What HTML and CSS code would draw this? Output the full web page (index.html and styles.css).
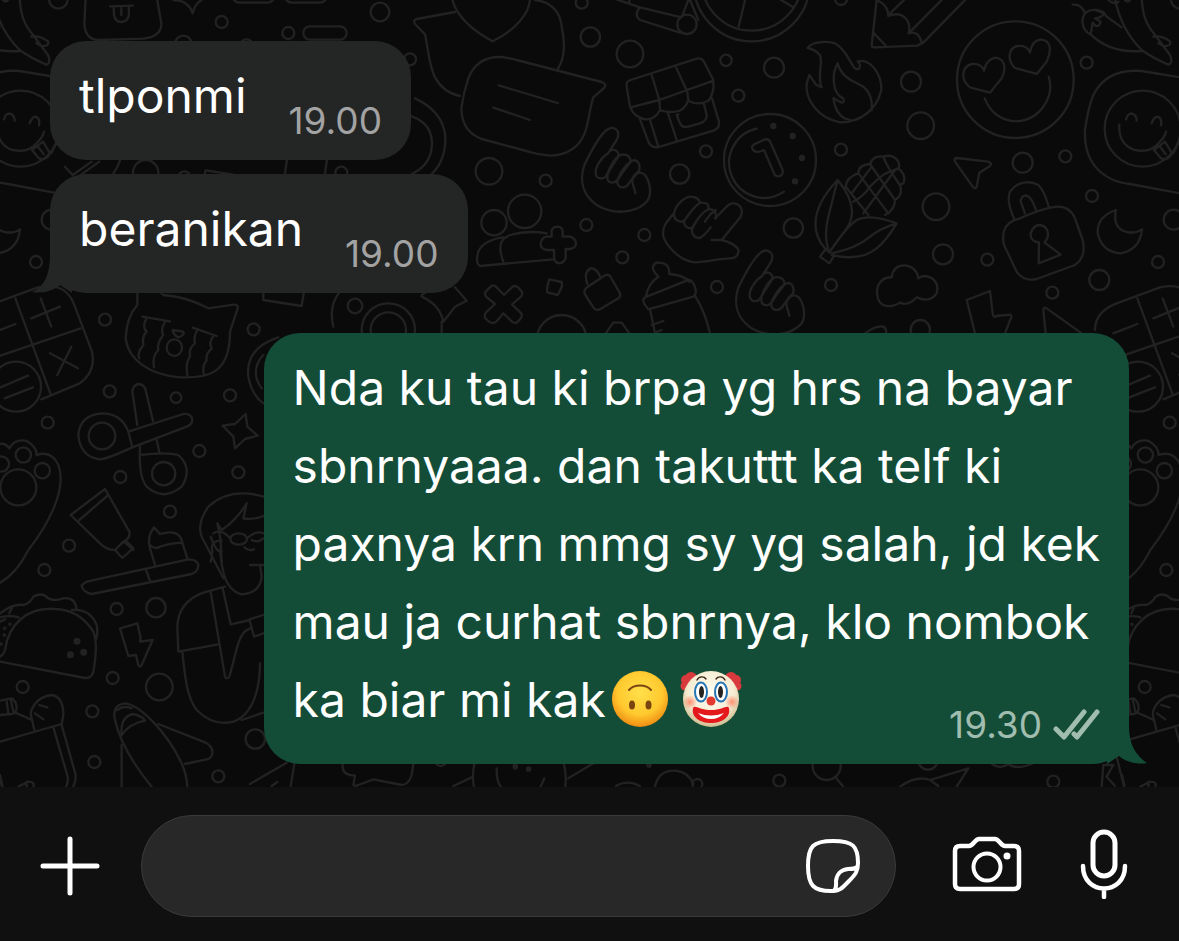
FILE: index.html
```html
<!DOCTYPE html>
<html lang="id">
<head>
<meta charset="utf-8">
<meta name="viewport" content="width=device-width, initial-scale=1">
<title>Chat</title>
<link rel="stylesheet" href="styles.css">
</head>
<body>
<main class="chat">
  <svg class="wallpaper" viewBox="0 0 1179 787" preserveAspectRatio="xMinYMin slice" aria-hidden="true">
    <defs>
      <g id="fist">
        <path d="M650 420C665 390 640 375 620 390C600 405 570 460 553 495C535 550 555 590 590 615C640 645 700 640 735 610C760 590 750 545 735 525C722 512 702 518 697 540C697 560 705 565 706 580"/>
        <path d="M650 420L624 460C600 475 585 505 587 520C590 540 612 538 618 528C632 505 645 485 656 468C655 445 630 445 624 460"/>
        <path d="M656 468C635 485 620 520 622 535C625 552 645 550 652 540C668 515 680 500 692 485C690 462 668 460 656 468M692 485C670 500 650 535 652 550C660 570 682 562 688 548L718 510C722 488 708 474 692 485"/>
      </g>
      <g id="doodles">
        <!-- top left -->
        <g transform="scale(.33333)">
          <circle cx="175" cy="-2" r="28"/>
          <path d="M257-10L253 70Q255 118 295 120L430 116Q485 110 484 70L470-10"/>
          <path d="M330 19L398 17M341 20L342 45Q345 66 364 66Q387 64 387 40L386 20M364 22V45"/>
          <path d="M520 0Q565 0 578 40Q585 10 605 0"/>
          <circle cx="665" cy="66" r="18"/><circle cx="865" cy="99" r="18"/><circle cx="1140" cy="36" r="28"/>
          <circle cx="1230" cy="178" r="18"/><circle cx="550" cy="132" r="25"/><circle cx="740" cy="136" r="18"/>
          <rect x="910" y="79" width="130" height="40" rx="20"/>
          <rect x="698" y="-32" width="125" height="40" rx="20"/><rect x="855" y="-32" width="125" height="40" rx="20"/>
          <circle cx="437" cy="518" r="38"/><circle cx="553" cy="532" r="18"/><circle cx="1024" cy="518" r="18"/>
          <path d="M195 500L218 525L275 485M235 530L298 485M340 520Q355 500 362 475M610 540L617 511L700 524M855 522L862 470M975 522L982 470"/>
        </g>
        <!-- top centre -->
        <g transform="translate(400) scale(.33333)">
          <path d="M165 36L50 57Q38 60 45 72L75 103C85 150 88 200 105 232Q130 278 180 288M155-10C165 45 215 90 278 124C345 90 392 40 390-10M405 0C460 5 482 45 485 80C495 125 497 170 474 206"/>
          <path d="M205 235Q230 170 300 171Q320 172 350 180L605 246Q622 252 612 264L580 292C570 320 568 355 556 395Q530 465 450 467Q420 465 390 456L245 417Q185 395 184 325Q190 280 205 235ZM296 256L473 309M280 323L390 360"/>
          <circle cx="545" cy="8" r="18"/><circle cx="571" cy="111" r="29"/><circle cx="690" cy="162" r="40"/>
          <circle cx="978" cy="181" r="17"/><circle cx="1122" cy="203" r="30"/><circle cx="1015" cy="287" r="18"/>
          <circle cx="918" cy="454" r="18"/><circle cx="839" cy="522" r="29"/><circle cx="267" cy="514" r="40"/><circle cx="437" cy="542" r="18"/>
          <circle cx="559" cy="675" r="18"/><circle cx="733" cy="705" r="18"/><circle cx="667" cy="772" r="18"/><circle cx="951" cy="861" r="18"/><circle cx="1180" cy="684" r="29"/>
          <path d="M640-5L720 22L845 52M720 22Q700 45 720 60L840 98M688 10V-5M845 52L865 0M870 0L895 60"/>
          <circle cx="861" cy="73" r="29"/>
          <circle cx="1055" cy="-50" r="174"/><circle cx="1055" cy="-58" r="150"/><path d="M1016 80L1035 0M1180 22L1130-8"/>
          <path d="M680 260Q676 245 692 240L890 176Q905 172 912 185L940 240Q944 280 925 302Q895 318 865 302Q850 335 825 335Q800 338 780 330Q765 360 735 358Q700 350 690 320ZM755 225L778 300L780 330M828 202L862 275L865 302M692 322L778 300L940 242M720 358L745 425Q755 447 780 440L940 392Q960 385 957 365L936 295M750 360L775 440M804 340L830 420M835 343L830 345L840 370Q847 385 865 380L900 370Q922 362 920 345L912 312"/>
          <circle cx="1110" cy="480" r="138"/><path d="M1070 386A105 105 0 1 0 1152 575"/>
          <path d="M1062 433L1095 418Q1108 416 1112 428L1148 510Q1150 528 1136 529Q1126 530 1122 520L1092 450L1075 456Q1056 455 1056 440Z"/>
          <g class="dots"><circle cx="1120" cy="378" r="6"/><circle cx="1178" cy="408" r="6"/><circle cx="1185" cy="544" r="6"/><circle cx="1206" cy="474" r="6"/></g>
          <use href="#fist"/>
          <use href="#fist" transform="translate(462 368)"/>
          <path d="M822 640C800 665 785 680 790 710C805 750 850 785 885 787C920 787 960 775 990 775Q1015 775 1016 750Q1005 730 965 720L1022 650C1035 620 1005 600 985 615L945 655M935 720H965M822 640C828 610 860 585 880 591Q895 593 900 608Q930 605 925 628Q950 625 948 655M900 608C880 620 865 645 853 662C840 670 820 660 822 640M925 628C905 635 890 660 878 682C865 690 848 675 853 662M948 630C930 640 925 650 915 665M932 682Q915 705 900 714C880 715 870 695 880 682"/>
          <circle cx="282" cy="668" r="38"/><circle cx="374" cy="634" r="50"/>
          <path d="M310 712Q250 720 235 755Q225 790 240 798L460 778M310 785Q285 720 330 705Q380 690 440 700M455 710V690Q460 680 472 680Q488 680 488 698V710H510Q528 715 528 733Q525 745 510 747H497V775Q490 790 478 790Q462 788 462 772V750H440Q420 745 422 730Q425 712 440 710Z"/>
          <path d="M257 875L275 857Q283 855 290 862L312 885L338 860Q346 855 355 863L366 875Q368 884 363 890L336 913L364 940Q368 950 360 958L350 968Q342 970 336 965L310 940L290 964Q280 972 270 967L256 955Q252 945 258 937L285 912L258 890Q253 882 257 875Z"/>
          <path d="M448 838L485 846Q488 855 483 866L473 885L442 877Q440 870 443 855ZM65 885L100 862M165 862L200 902L165 920L130 965Q120 915 65 890M125 965V1000"/>
          <path d="M557 865Q550 875 556 885L582 925Q590 932 600 928L655 895Q663 890 660 880L630 828Q625 822 615 826ZM562 852Q550 815 572 805Q590 803 602 834"/>
          <circle cx="485" cy="1020" r="75"/><path d="M617 1000L640 968H665L688 1000"/>
          <path d="M740 890Q725 895 732 910L745 928Q810 910 880 890Q895 880 880 850Q870 835 860 842ZM738 888Q745 850 775 830Q745 800 770 788Q810 785 808 822Q850 825 868 845M750 928L765 1000M885 888Q915 935 930 1000M755 975L790 963M765 998L785 990"/>
          <path d="M-10 340Q95 350 96 430Q95 495 35 522M45 295Q130 335 136 410Q138 480 95 522"/>
          <circle cx="-35" cy="990" r="80"/><circle cx="-35" cy="990" r="53"/>
        </g>
        <!-- top right -->
        <g transform="translate(780) scale(.33333)">
          <circle cx="183" cy="-3" r="18"/><circle cx="393" cy="245" r="30"/><circle cx="422" cy="377" r="40"/><circle cx="183" cy="449" r="18"/>
          <circle cx="920" cy="188" r="18"/><circle cx="728" cy="488" r="30"/><circle cx="856" cy="469" r="18"/><circle cx="936" cy="588" r="18"/>
          <circle cx="468" cy="620" r="40"/><circle cx="489" cy="763" r="30"/><circle cx="622" cy="779" r="18"/><circle cx="958" cy="840" r="30"/>
          <circle cx="817" cy="878" r="18"/><circle cx="1134" cy="786" r="18"/><circle cx="153" cy="855" r="18"/><circle cx="1181" cy="659" r="30"/><circle cx="421" cy="989" r="29"/>
          <path d="M83 144C95 125 135 122 165 130C200 150 210 190 225 205C240 215 245 195 233 184C270 175 305 220 304 270C290 330 240 368 180 367C115 355 75 300 80 250L88 225L108 254L125 262C110 230 130 190 120 165Q105 148 83 144ZM173 190C155 220 155 280 190 296Q195 308 185 308L160 294C165 330 180 355 210 360M173 190C185 235 225 245 250 260Q280 285 275 330"/>
          <path d="M290 0L275 135Q275 142 285 142L412 137L430 128L560-5M290 0Q325 15 325 48C370 30 395 65 386 100Q415 90 425 128M325 45L372 0M388 98L485 0M280 98L318 138"/>
          <circle cx="706" cy="239" r="175"/>
          <path d="M630 278L570 262C540 240 545 200 575 192Q605 190 612 212Q618 180 645 173C675 175 680 205 665 235ZM770 222L705 204C680 180 685 145 712 138Q742 135 750 158Q755 122 782 118C815 122 815 150 800 185ZM614 295C630 335 660 362 710 364C780 360 825 290 806 230"/>
          <path d="M878 14Q905 12 915 40M950 30Q910 25 907 65Q910 95 932 103C970 140 1020 158 1085 153M932 103L938 68Q955 90 962 65L945 55Q975 50 968 38L945 30Q970 30 980 50L1025 82M1005-5C1015 50 1040 105 1085 150Q1120 175 1165 194Q1180 190 1170 165L1125 105C1095 70 1088 40 1085-5M1120 110Q1145 105 1170 124Q1175 140 1150 138L1135 130M985 0Q1000 15 1015 5M1035 0Q1045 8 1050 0"/>
          <path d="M1200 232L1085 213Q980 205 940 285Q925 320 915 390Q910 500 1000 540Q1020 548 1050 552L1200 580"/>
          <circle cx="1088" cy="386" r="114"/>
          <path d="M1038 358Q1043 340 1055 340Q1070 345 1070 362M1115 370Q1122 350 1133 350Q1147 355 1143 376M1018 374Q1015 430 1060 449Q1110 462 1140 425Q1155 410 1158 395M1122 450L1140 472Q1150 482 1165 474Q1180 465 1170 450L1155 425ZM1140 440L1157 462M1180 460L1195 430"/>
          <path d="M530 474L625 485Q638 490 630 498L598 518L590 560Q585 570 578 560L525 485Q520 475 530 474Z"/>
          <path d="M173 540Q215 590 216 635Q215 665 200 685L148 757Q130 710 145 650Q160 590 173 540ZM173 540C125 590 100 640 108 690Q115 730 148 757M148 757Q200 680 230 660Q270 640 350 670Q320 720 290 745Q240 785 155 765M155 760Q230 745 270 710Q300 685 350 670M135 750L120 770L148 790L162 768M197 560Q200 530 235 520Q235 495 270 492Q280 465 310 470Q340 460 355 485Q360 500 355 505Q380 525 370 550L360 555Q370 585 345 600Q345 630 315 645M197 560L265 645M235 520L325 640M270 492L345 600M310 470Q320 500 360 555M220 605Q250 590 270 560Q300 530 318 520L355 505M250 640L345 510M215 580L275 500"/>
          <path d="M298 905Q285 880 295 855Q310 830 335 832Q340 795 375 796Q410 800 415 835Q435 820 460 838Q478 855 470 880Q450 910 410 892Q385 920 360 908Q320 930 298 905Z"/>
          <path d="M720 655Q800 620 835 620Q870 620 885 655L908 720Q920 770 885 795L770 837Q730 845 710 815L672 735Q660 680 700 662ZM703 658C690 630 680 600 690 575C710 545 750 540 775 555C795 575 800 600 806 620M735 640L722 605Q722 588 738 586Q755 590 768 630M776 790L777 727Q750 725 752 700Q760 675 780 675Q805 680 804 705Q802 720 793 727L842 764Z"/>
          <path d="M1008 630Q950 650 953 700Q965 755 1020 760Q1080 750 1086 688Q1070 700 1045 697C1010 690 1000 665 1008 630Z"/>
          <path d="M585 1000L560 900L630 873L638 940Q640 955 650 948L690 944Q698 948 690 960L675 1000M797 1000L790 930Q790 920 800 925L905 1000M255 1000Q290 975 310 980Q320 985 318 1000"/>
          <!-- four-key calculator -->
          <path d="M945 990Q945 935 1010 910L1140 862Q1220 845 1247 910L1302 1055Q1315 1115 1265 1150L1150 1198M1072 895L1178 1183M960 1090L1268 985M1000 1000L1072 972M1148 895L1180 980M1120 955L1206 920M1176 1060L1260 1105M1240 1040L1198 1125"/>
          <circle cx="1074" cy="1160" r="75"/><path d="M1020 1165L1110 1127M1040 1195L1125 1162"/>
        </g>
        <!-- middle left -->
        <g transform="translate(0 280) scale(.33333)">
          <circle cx="315" cy="119" r="18"/><circle cx="761" cy="148" r="18"/><circle cx="329" cy="334" r="18"/><circle cx="528" cy="353" r="16"/><circle cx="690" cy="346" r="18"/>
          <circle cx="143" cy="428" r="18"/><circle cx="598" cy="513" r="18"/><circle cx="361" cy="591" r="18"/><circle cx="715" cy="577" r="18"/><circle cx="510" cy="695" r="18"/>
          <path d="M412 35V75Q380 110 377 175C385 240 450 285 540 292C620 295 690 285 690 155L713 85Q715 72 700 74L625 85Q560 50 490 45L480 35M427 110L510 124M440 114Q425 140 440 155Q425 170 430 195Q410 220 418 235M495 126Q480 150 490 165Q470 190 475 210Q455 230 462 262M578 143L650 168M592 150Q580 170 585 190Q565 205 570 230Q555 250 562 285M640 168Q625 190 635 205Q615 225 620 240Q605 260 612 285M518 150L550 155Q555 165 535 172Q520 165 518 150Z"/>
          <ellipse cx="523" cy="203" rx="23" ry="25"/><path d="M790 35V60L905 78L912 35"/>
          <path d="M1020 35Q985 75 1000 140"/><circle cx="1065" cy="78" r="22"/>
          <path d="M835 172Q735 205 745 290Q755 345 790 370M790 225Q765 250 768 285Q770 305 785 325"/>
          <circle cx="306" cy="468" r="40"/><circle cx="491" cy="581" r="35"/>
          <path d="M385 455Q365 400 305 400Q240 405 235 465Q240 530 300 538Q320 537 397 502ZM412 435L397 335Q400 312 418 312Q435 315 438 335L459 423M385 455L550 402Q575 400 577 420Q575 435 560 440L397 502M420 500Q415 590 440 620Q490 665 545 620Q580 565 535 525Q500 515 420 525M470 480L478 515"/>
          <path d="M737 402L742 440L773 467L735 477L705 505L700 470L668 437L705 432Z"/>
          <circle cx="55" cy="622" r="54"/><circle cx="70" cy="525" r="23"/><circle cx="127" cy="572" r="23"/><circle cx="4" cy="552" r="23"/>
          <path d="M-15 500Q10 480 28 505Q45 475 80 483Q110 500 110 525Q155 510 175 555C200 620 155 720 85 810M0 908Q50 880 85 810"/>
          <path d="M212 705L315 627L388 755Q392 775 370 785L345 810Q320 810 300 790L212 705M238 720L325 645M375 788L400 810"/>
          <path d="M790 650Q690 620 625 680Q590 730 605 770L670 895M740 670L730 715Q760 720 790 708M740 670Q710 720 665 750L652 730L662 780L665 845M632 845Q640 820 635 800Q640 780 665 782"/>
        </g>
        <!-- bottom left -->
        <g transform="translate(0 530) scale(.33333)">
          <circle cx="207" cy="47" r="18"/><circle cx="133" cy="120" r="18"/><circle cx="350" cy="237" r="18"/><circle cx="468" cy="233" r="29"/><circle cx="338" cy="444" r="18"/>
          <circle cx="478" cy="471" r="40"/><circle cx="68" cy="471" r="18"/><circle cx="277" cy="544" r="18"/><circle cx="283" cy="696" r="18"/><circle cx="655" cy="739" r="18"/><circle cx="766" cy="627" r="29"/>
          <path d="M345 60L367 84L400 54L380 35M465 105L450 55Q440 20 462-8L480 12Q540-5 547 38L562 85M450 45Q465 60 480 50Q510 40 547 38"/>
          <path d="M260 155L565 88Q592 88 595 105Q595 125 575 132L275 192Q245 185 245 165ZM438 120L450 153"/>
          <path d="M0 395L255 444Q275 445 280 425Q295 340 280 305Q240 240 165 237C80 230 25 285 15 360Q10 375 0 380M0 250Q40 220 70 225Q90 220 100 200Q125 185 145 205Q160 215 190 205Q225 200 230 238M215 240Q270 235 290 285Q295 310 287 330M28 250L35 235M0 262Q30 255 55 262M0 275L15 268"/>
          <g class="dots"><circle cx="231" cy="334" r="7"/><circle cx="251" cy="367" r="7"/><circle cx="211" cy="374" r="7"/><circle cx="14" cy="295" r="2"/><circle cx="30" cy="283" r="2"/><circle cx="13" cy="315" r="2"/><circle cx="3" cy="342" r="2"/></g>
          <path d="M360 295L412 280L422 325L420 335L458 330L425 405Q420 415 415 405L408 375L385 378Z"/>
          <path d="M675 170L610 188Q535 215 532 290L535 365L655 343M547 365C555 440 560 500 590 540Q640 590 700 575C770 550 780 450 780 400M632 185L675 440Q680 450 688 440C700 400 705 370 715 340Q725 305 750 295M668 175L692 283L750 270M790 255L748 268L762 320L790 310M725 570L790 548M660 60L665 100Q675 180 725 193Q780 190 785 140L780 105M750 105H790"/>
          <ellipse cx="716" cy="27" rx="25" ry="17"/><path d="M740 25Q770 0 790 10M755 30Q775 40 790 25M733 52Q745 65 762 58M632 20Q650 70 665 65M640 10Q665-5 690 25"/>
          <path d="M0 635L185 582L190 555Q190 500 155 495C110 500 85 540 95 565L103 600M118 525L142 532M105 550L130 568M0 512L35 505Q50 515 50 535Q48 550 35 552L0 555M20 515L25 548M33 512L40 545M45 548Q75 560 95 570M185 585L227 735Q228 750 220 770M160 592L203 740Q205 760 198 770M0 735L8 770M55 770L85 755Q105 755 100 770M80 755V770"/>
          <path d="M345 570Q335 525 375 520C420 525 500 605 545 700Q560 735 562 770M345 570Q365 660 455 770M365 645V770M365 615Q360 560 400 552Q430 560 435 572Q390 580 365 615ZM352 540Q370 525 395 535M475 582L615 637Q640 650 637 670Q635 685 620 688L555 702"/>
        </g>
        <!-- strip under the last message -->
        <g transform="translate(250 740) scale(.33333)">
          <path d="M0 132L110 68M133 72L122 138M65 138L82 126M278 72Q275 100 300 105L315 107L310 135Q315 140 325 135L370 118L455 135Q475 135 485 105L490 72M610 138L665 112M673 72Q665 110 672 140M942 72Q950 110 946 140M740 85Q740 130 753 140M883 115L872 140M955 115L1030 70M1098 138Q1130 118 1170 138M1215 140Q1225 90 1275 92Q1315 95 1330 132M1950 140Q2000 105 2040 120L2155 85L2120 140M2040 120L2065 138"/>
          <circle cx="572" cy="60" r="18"/><circle cx="1342" cy="132" r="15"/><circle cx="1588" cy="122" r="18"/><circle cx="2034" cy="60" r="29"/><circle cx="2410" cy="125" r="18"/>
          <circle cx="1730" cy="78" r="42"/><path d="M1755 110L1780 140M2226 72Q2250 90 2275 72Q2300 90 2345 72M2555 140L2560 75L2590 75L2570 110L2595 138M2600 50L2622 140"/>
          <g class="dots"><circle cx="796" cy="80" r="5"/><circle cx="836" cy="87" r="5"/><circle cx="1197" cy="75" r="5"/></g>
        </g>
      </g>
    </defs>
    <use href="#doodles"/>
    <use href="#doodles" x="-1122"/>
    <use href="#doodles" x="1122"/>
  </svg>

  <article class="bubble bubble-in">
    <p class="text">tlponmi</p>
    <footer class="meta"><time datetime="19:00">19.00</time></footer>
  </article>

  <article class="bubble bubble-in">
    <p class="text">beranikan</p>
    <footer class="meta"><time datetime="19:00">19.00</time></footer>
    <svg class="tail tail-in" viewBox="0 0 40 48" aria-hidden="true"><path d="M18 0V10C18 30 12 42 0 47C12 49 22 45 28 40L40 48V0Z"/></svg>
  </article>

  <article class="bubble bubble-out">
    <p class="text">Nda ku tau ki brpa yg hrs na bayar<br>sbnrnyaaa. dan takuttt ka telf ki<br>paxnya krn mmg sy yg salah, jd kek<br>mau ja curhat sbnrnya, klo nombok<br>ka biar mi kak<svg class="emoji" viewBox="0 0 64 60" role="img" aria-label="Upside-down face"><defs><radialGradient id="yellow" cx=".5" cy=".38" r=".62"><stop offset="0" stop-color="#ffe04a"/><stop offset=".65" stop-color="#ffc82e"/><stop offset="1" stop-color="#f08c12"/></radialGradient></defs><circle cx="30" cy="30" r="28" fill="url(#yellow)"/><path d="M19 21C24 15 36 15 41 21" fill="none" stroke="#7b4512" stroke-width="2" stroke-linecap="round"/><ellipse cx="22" cy="36" rx="3" ry="4.500" fill="#7b4512"/><ellipse cx="38.500" cy="36" rx="3" ry="4.500" fill="#7b4512"/></svg><svg class="emoji" viewBox="0 0 64 60" role="img" aria-label="Clown face"><defs><radialGradient id="clown" cx=".5" cy=".4" r=".6"><stop offset="0" stop-color="#fffdf2"/><stop offset=".7" stop-color="#f6ecd2"/><stop offset="1" stop-color="#cbbb8d"/></radialGradient><radialGradient id="blush"><stop offset="0" stop-color="#ff7858" stop-opacity=".8"/><stop offset="1" stop-color="#ff7858" stop-opacity="0"/></radialGradient></defs><g fill="#d93a3e"><circle cx="12" cy="9" r="6"/><circle cx="7" cy="11" r="5"/><circle cx="6" cy="17" r="4.500"/><circle cx="52" cy="9" r="6"/><circle cx="57" cy="11" r="5"/><circle cx="58" cy="17" r="4.500"/></g><circle cx="32" cy="30" r="28" fill="url(#clown)"/><circle cx="11" cy="33" r="7" fill="url(#blush)"/><circle cx="53" cy="33" r="7" fill="url(#blush)"/><g fill="none" stroke="#3a2418" stroke-width="1.400" stroke-linecap="round"><path d="M18 11C20 7 25 7 27 10M37 10C39 7 44 7 46 11"/></g><g fill="#fff" stroke="#2575b5" stroke-width="2"><ellipse cx="22" cy="23" rx="6" ry="9.500"/><ellipse cx="42" cy="23" rx="6" ry="9.500"/></g><ellipse cx="22.500" cy="23" rx="2.500" ry="6" fill="#25211f"/><ellipse cx="41.500" cy="23" rx="2.500" ry="6" fill="#25211f"/><circle cx="32" cy="32" r="4.500" fill="#e23a2c"/><path d="M14 39C16 35 20 41 32 41C44 41 48 35 50 39C52 48 43 54 32 54C21 54 12 48 14 39Z" fill="#e3191c"/><path d="M19 44Q32 49 45 44Q40 50 32 50Q24 50 19 44Z" fill="#fff"/></svg></p>
    <footer class="meta"><time datetime="19:30">19.30</time>
      <svg class="ticks" viewBox="0 0 48 32" role="img" aria-label="Delivered"><path d="M4 20L12 28L32 3M22 25L25 28L45 3"/></svg>
    </footer>
    <svg class="tail tail-out" viewBox="0 0 40 48" aria-hidden="true"><path d="M22 0V10C22 30 30 40 40 47C28 49 18 45 12 40L0 48V0Z"/></svg>
  </article>
</main>

<form class="composer">
  <button class="icon-btn" type="button" aria-label="Attach"><svg width="60" height="60" viewBox="0 0 60 60"><path d="M30 3V57M3 30H57" stroke-width="5"/></svg></button>
  <div class="field">
    <input class="field-input" type="text" aria-label="Message">
    <button class="icon-btn" type="button" aria-label="Stickers"><svg width="56" height="56" viewBox="0 0 56 56"><path d="M29 53C8 54 3 47 3 28C3 8 8 3 28 3C48 3 53 8 53 25C53 34 50 37 44 43C38 49 35 53 29 53C32 49 31 46 31 43C32 35 36 32 43 31C48 31 50 31 52 29" stroke-width="4"/></svg></button>
  </div>
  <div class="actions">
    <button class="icon-btn" type="button" aria-label="Camera"><svg width="70" height="56" viewBox="0 0 70 56"><path d="M8 10H17C21 10 23 3 27 3H43C47 3 49 10 53 10H62Q67 10 67 15V48Q67 53 62 53H8Q3 53 3 48V15Q3 10 8 10Z" stroke-width="4.500"/><circle cx="35" cy="31" r="13.500" stroke-width="4"/><circle cx="55" cy="20" r="3.500" fill="#fff" stroke="none"/></svg></button>
    <button class="icon-btn" type="button" aria-label="Voice message"><svg width="48" height="70" viewBox="0 0 48 70"><rect x="13" y="3" width="22" height="44" rx="11" stroke-width="5"/><path d="M3 37C3 67 45 67 45 37M24 60V68" stroke-width="4.500"/></svg></button>
  </div>
</form>
</body>
</html>
```

FILE: styles.css
```css
* {
  box-sizing: border-box;
}

body {
  margin: 0;
  min-height: 100vh;
  display: flex;
  flex-direction: column;
  background: #0a0a0a;
  color: #fff;
  font-family: Inter, "Liberation Sans", sans-serif;
}

.chat {
  position: relative;
  flex: 1;
  display: flex;
  flex-direction: column;
  gap: 14px;
  padding: 41px 50px 23px;
  overflow: hidden;
}

.wallpaper {
  position: absolute;
  inset: 0;
  width: 100%;
  height: 100%;
  fill: none;
  stroke: #222;
  stroke-width: 7;
  stroke-linecap: round;
  stroke-linejoin: round;
}

.dots {
  fill: #222;
}

.bubble {
  position: relative;
  padding: 16px 29px 17px;
  border-radius: 36px;
}

.bubble-in {
  align-self: flex-start;
  display: flex;
  align-items: flex-end;
  gap: 42px;
  background: #242625;
}

.bubble-out {
  align-self: flex-end;
  display: grid;
  margin-top: 26px;
  background: #144d37;
}

.text {
  margin: 0;
  padding-bottom: 8px;
  font-size: 48px;
  line-height: 78px;
}

.bubble-out .text,
.bubble-out .meta {
  grid-area: 1 / 1;
}

.meta {
  display: flex;
  align-items: center;
  gap: 10px;
  color: #a3a3a3;
  font-size: 37px;
  line-height: 44px;
}

.bubble-out .meta {
  align-self: end;
  justify-self: end;
  color: #a0bdb0;
}

.emoji {
  width: 64px;
  height: 60px;
  margin: 0 1px 0 4px;
  vertical-align: -12px;
}

.ticks {
  width: 48px;
  height: 32px;
  fill: none;
  stroke: currentColor;
  stroke-width: 5;
  stroke-linecap: round;
  stroke-linejoin: round;
}

.tail {
  position: absolute;
  bottom: 0;
  width: 40px;
  height: 48px;
}

.tail-in {
  left: -18px;
  fill: #242625;
}

.tail-out {
  right: -18px;
  fill: #144d37;
}

.composer {
  position: relative;
  display: flex;
  align-items: center;
  padding: 28px 51px 24px 40px;
  background: #101010;
}

.icon-btn {
  display: flex;
  flex: none;
  padding: 0;
  border: 0;
  background: none;
}

.icon-btn svg {
  fill: none;
  stroke: #fff;
  stroke-linecap: round;
  stroke-linejoin: round;
}

.field {
  flex: 1;
  min-width: 0;
  display: flex;
  align-items: center;
  height: 102px;
  margin: 0 56px 0 41px;
  padding: 0 34px;
  border: 1px solid #3a3a3a;
  border-radius: 51px;
  background: #282828;
}

.field-input {
  flex: 1;
  min-width: 0;
  padding: 0;
  border: 0;
  outline: 0;
  background: none;
  color: #fff;
  font: inherit;
  font-size: 48px;
}

.actions {
  display: flex;
  align-items: center;
  gap: 58px;
  padding-bottom: 4px;
}
```
